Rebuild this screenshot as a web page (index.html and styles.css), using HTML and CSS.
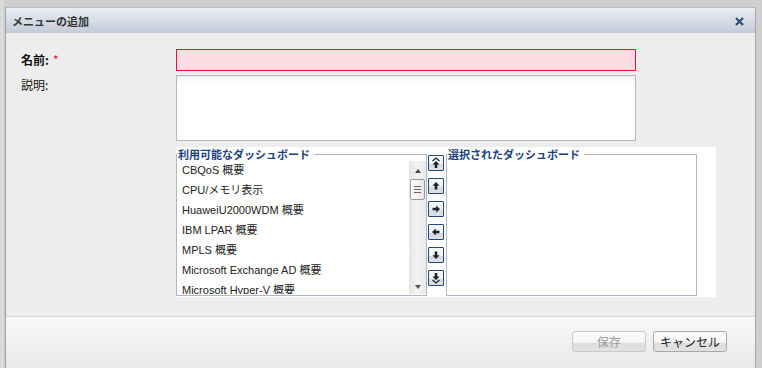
FILE: index.html
```html
<!DOCTYPE html>
<html lang="ja">
<head>
<meta charset="utf-8">
<link rel="stylesheet" href="styles.css">
</head>
<body>
<div class="dialog">
  <div class="header">
    <span class="title">メニューの追加</span>
    <svg class="close" width="9" height="9" viewBox="0 0 9 9"><path d="M1 1 L8 8 M8 1 L1 8" stroke="#2b5077" stroke-width="2.2" fill="none"/></svg>
  </div>
  <div class="body">
    <div class="row row-name">
      <span class="lbl bold">名前:<span class="star">*</span></span>
      <div class="input invalid"></div>
    </div>
    <div class="row row-desc">
      <span class="lbl">説明:</span>
      <div class="textarea"></div>
    </div>
    <div class="row row-lists">
      <span class="lbl"></span>
      <div class="lists">
        <fieldset class="box">
          <legend>利用可能なダッシュボード</legend>
          <div class="listwrap">
            <ul class="items">
              <li>CBQoS 概要</li>
              <li>CPU/メモリ表示</li>
              <li>HuaweiU2000WDM 概要</li>
              <li>IBM LPAR 概要</li>
              <li>MPLS 概要</li>
              <li>Microsoft Exchange AD 概要</li>
              <li>Microsoft Hyper-V 概要</li>
            </ul>
            <div class="scrollbar">
              <div class="sb-btn"><span class="tri up"></span></div>
              <div class="sb-track"><div class="thumb"><i></i><i></i><i></i></div></div>
              <div class="sb-btn"><span class="tri down"></span></div>
            </div>
          </div>
        </fieldset>
        <div class="movers">
          <div class="mv"><svg width="14" height="14" viewBox="0 0 14 14"><path d="M3.5 5 L7 2 L10.5 5" stroke="#222" stroke-width="1.2" fill="none"/><path d="M7 5 L10.5 8.5 L8.3 8.5 L8.3 12 L5.7 12 L5.7 8.5 L3.5 8.5 Z" fill="#222"/></svg></div>
          <div class="mv"><svg width="14" height="14" viewBox="0 0 14 14"><path d="M7 3 L10.5 6.8 L8.3 6.8 L8.3 10.5 L5.7 10.5 L5.7 6.8 L3.5 6.8 Z" fill="#222"/></svg></div>
          <div class="mv"><svg width="14" height="14" viewBox="0 0 14 14"><path d="M11 7 L7.2 3.5 L7.2 5.7 L3.5 5.7 L3.5 8.3 L7.2 8.3 L7.2 10.5 Z" fill="#222"/></svg></div>
          <div class="mv"><svg width="14" height="14" viewBox="0 0 14 14"><path d="M3 7 L6.8 3.5 L6.8 5.7 L10.5 5.7 L10.5 8.3 L6.8 8.3 L6.8 10.5 Z" fill="#222"/></svg></div>
          <div class="mv"><svg width="14" height="14" viewBox="0 0 14 14"><path d="M7 11 L10.5 7.2 L8.3 7.2 L8.3 3.5 L5.7 3.5 L5.7 7.2 L3.5 7.2 Z" fill="#222"/></svg></div>
          <div class="mv"><svg width="14" height="14" viewBox="0 0 14 14"><path d="M7 9 L10.5 5.5 L8.3 5.5 L8.3 2 L5.7 2 L5.7 5.5 L3.5 5.5 Z" fill="#222"/><path d="M3.5 9 L7 12 L10.5 9" stroke="#222" stroke-width="1.2" fill="none"/></svg></div>
        </div>
        <fieldset class="box">
          <legend>選択されたダッシュボード</legend>
        </fieldset>
      </div>
    </div>
  </div>
  <div class="footer">
    <button class="btn disabled">保存</button>
    <button class="btn">キャンセル</button>
  </div>
</div>
</body>
</html>
```

FILE: styles.css
```css
* { box-sizing: border-box; }
html, body { margin: 0; padding: 0; }
body {
  width: 762px;
  height: 368px;
  overflow: hidden;
  background: linear-gradient(to right, #d2d2d2 0, #e2e2e2 2px, #cfcfcf 4px);
  font-family: "Noto Sans CJK JP", sans-serif;
}
.dialog {
  margin: 7px 0 0 5px;
  width: 751px;
  height: 361px;
  border-top: 1px solid #b9bcc2;
  border-left: 1px solid #9fa2a8;
  border-right: 1px solid #a4a6aa;
  display: flex;
  flex-direction: column;
  background: #ededed;
}
.header {
  height: 25px;
  flex: none;
  background: linear-gradient(#eaedf3, #c2cbd8);
  display: flex;
  align-items: center;
  justify-content: space-between;
  padding: 0 11px 0 6px;
}
.title {
  font-size: 11px;
  font-weight: bold;
  color: #333;
  line-height: 14px;
}
.close { display: block; margin-top: 1px; }
.body {
  flex: 1;
  padding: 16px 0 0 15px;
}
.row {
  display: grid;
  grid-template-columns: 155px 540px;
}
.row-name { align-items: center; }
.row-desc { margin-top: 4px; }
.row-lists { margin-top: 6px; }
.lbl {
  font-size: 12px;
  color: #111;
  line-height: 20px;
}
.bold { font-weight: bold; }
.star { color: #e8102a; margin-left: 4px; font-weight: normal; }
.input {
  width: 460px;
  height: 22px;
  border: 1px solid #e5102c;
  background: #fddde3;
}
.textarea {
  width: 460px;
  height: 66px;
  border: 1px solid #b3b6c7;
  background: #fff;
  box-shadow: inset 0 4px 6px -2px rgba(0, 0, 0, 0.09);
}
.lists {
  width: 540px;
  height: 150px;
  background: #fff;
  display: flex;
  align-items: flex-start;
}
.box {
  width: 251px;
  height: 149px;
  margin: 0;
  padding: 0;
  border: 1px solid #b3b6c7;
  min-width: 0;
}
.box legend {
  margin: 0;
  padding: 0 4px 0 1px;
  font-size: 11px;
  line-height: 14px;
  font-weight: bold;
  color: #1b3f80;
}
.listwrap {
  display: flex;
  height: 133px;
}
.items {
  flex: 1;
  margin: 0;
  padding: 0 0 0 5px;
  list-style: none;
  overflow: hidden;
  font-family: "Liberation Sans", "Noto Sans CJK JP", sans-serif;
  font-size: 11px;
  color: #222;
}
.items li {
  height: 20px;
  line-height: 19px;
  white-space: nowrap;
}
.scrollbar {
  width: 17px;
  flex: none;
  display: flex;
  flex-direction: column;
  background: linear-gradient(to right, #e3e3e3, #f3f3f3 50%, #e9e9e9);
}
.sb-btn {
  height: 17px;
  display: flex;
  align-items: center;
  justify-content: center;
}
.tri {
  width: 0;
  height: 0;
  border-left: 3.5px solid transparent;
  border-right: 3.5px solid transparent;
}
.tri.up { border-bottom: 4px solid #444; margin-top: 2px; }
.tri.down { border-top: 4px solid #555; margin-top: 2px; }
.sb-track { flex: 1; padding: 1px 1px 0 1px; }
.thumb {
  height: 21px;
  border: 1px solid #9c9c9c;
  border-radius: 2px;
  background: linear-gradient(to right, #fdfdfd, #e6e6e6);
  display: flex;
  flex-direction: column;
  justify-content: center;
  align-items: center;
  gap: 2px;
}
.thumb i {
  display: block;
  width: 7px;
  height: 1px;
  background: #666;
}
.movers {
  width: 16px;
  margin: 0 2px 0 1px;
  padding-top: 8px;
  display: flex;
  flex-direction: column;
  gap: 7px;
}
.mv {
  width: 16px;
  height: 16px;
  border: 1px solid #1f4a7a;
  border-radius: 1px;
  background: linear-gradient(#f7f8fb 0, #eef1f5 55%, #d3d8e0 56%, #dde1e8 100%);
}
.mv svg { display: block; }
.footer {
  height: 52px;
  flex: none;
  border-top: 1px solid #d6d6d6;
  background: linear-gradient(#f8f9fb, #e8e8e8);
  display: flex;
  justify-content: flex-end;
  align-items: flex-start;
  gap: 7px;
  padding: 14px 28px 0 0;
}
.btn {
  width: 74px;
  height: 21px;
  padding: 0;
  border: 1px solid #a9a9a9;
  border-radius: 3px;
  background: linear-gradient(#fcfcfc 0, #f5f5f5 55%, #dedede 56%, #e2e2e2 100%);
  font-family: "Noto Sans CJK JP", sans-serif;
  font-size: 12px;
  line-height: 18px;
  color: #222;
}
.btn.disabled {
  color: #9a9a9a;
  border-color: #c9c9c9;
}
```
